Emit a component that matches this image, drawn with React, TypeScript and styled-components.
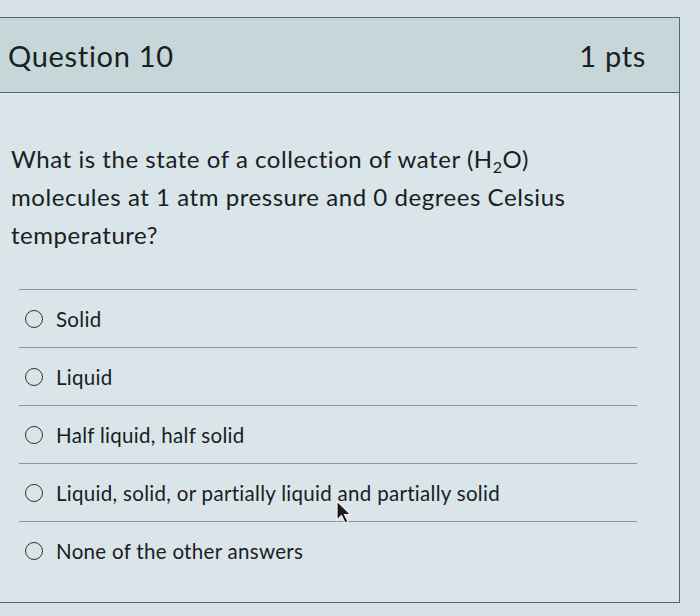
import React from "react";
import styled, { createGlobalStyle } from "styled-components";

const Global = createGlobalStyle`
  html, body {
    margin: 0;
    padding: 0;
    background: #d6e2e5;
    font-family: Lato, "Open Sans", "Liberation Sans", sans-serif;
    color: #182023;
  }
  #root {
    width: 700px;
    height: 616px;
    overflow: hidden;
    position: relative;
  }
`;

const Card = styled.section`
  margin-top: 17px;
  margin-left: -2px;
  width: 682px;
  height: 586px;
  border: 1.5px solid #56666b;
  box-sizing: border-box;
  background: #d9e5e8;
  display: flex;
  flex-direction: column;
`;

const Header = styled.header`
  height: 75px;
  box-sizing: border-box;
  background: #c6d6d9;
  border-bottom: 1.5px solid #56666b;
  display: flex;
  align-items: center;
  justify-content: space-between;
  padding: 0 33px 0 9px;
`;

const Title = styled.h2`
  margin: 0;
  font-size: 29px;
  font-weight: 400;
  letter-spacing: 0.7px;
`;

const Points = styled.span`
  font-size: 29px;
  letter-spacing: 0.7px;
`;

const Body = styled.div`
  padding: 47px 0 0 12px;
  display: flex;
  flex-direction: column;
`;

const Prompt = styled.p`
  margin: 0;
  font-size: 24px;
  line-height: 38px;
  letter-spacing: 0.55px;
  sub {
    font-size: 16px;
    line-height: 0;
    vertical-align: -5px;
  }
`;

const Answers = styled.ul`
  list-style: none;
  margin: 35px 42px 0 8px;
  padding: 0;
`;

const Answer = styled.li`
  height: 57px;
  border-top: 1.5px solid #8598a0;
  display: flex;
  align-items: center;
  gap: 13px;
  padding-left: 6px;
  font-size: 20.5px;
  letter-spacing: 0.3px;
`;

const Radio = styled.span`
  width: 18px;
  height: 18px;
  border: 1.8px solid #2b3538;
  border-radius: 50%;
  box-sizing: border-box;
  flex: none;
`;

const Cursor = styled.svg`
  position: absolute;
  left: 336px;
  top: 500px;
`;

const answers = [
  "Solid",
  "Liquid",
  "Half liquid, half solid",
  "Liquid, solid, or partially liquid and partially solid",
  "None of the other answers",
];

export default function App() {
  return (
    <>
      <Global />
      <Card>
        <Header>
          <Title>Question 10</Title>
          <Points>1 pts</Points>
        </Header>
        <Body>
          <Prompt>
            What is the state of a collection of water (H<sub>2</sub>O)
            <br />
            molecules at 1 atm pressure and 0 degrees Celsius
            <br />
            temperature?
          </Prompt>
          <Answers>
            {answers.map((a) => (
              <Answer key={a}>
                <Radio />
                {a}
              </Answer>
            ))}
          </Answers>
        </Body>
      </Card>
      <Cursor width="18" height="26" viewBox="0 0 18 26">
        <path d="M1 1 L1 20 L5.5 15.5 L9 23 L12 21.5 L8.5 14.5 L14.5 14.5 Z" fill="#1a1a1a" stroke="#f2f2f2" strokeWidth="1.2" />
      </Cursor>
    </>
  );
}
